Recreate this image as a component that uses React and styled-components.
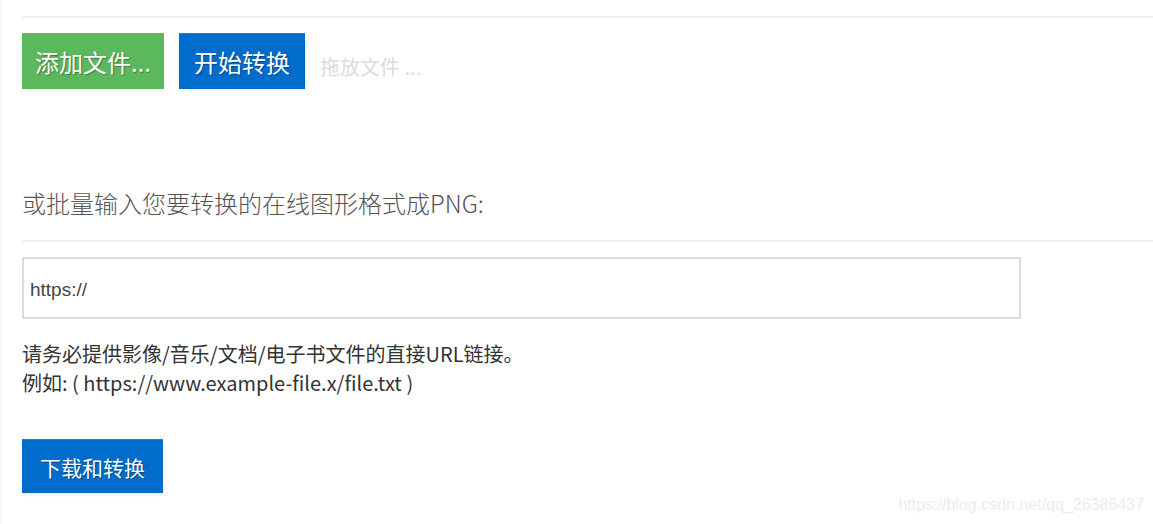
import React from 'react'
import styled, { createGlobalStyle } from 'styled-components'

const Global = createGlobalStyle`
  html, body {
    margin: 0;
    padding: 0;
    background: #fff;
  }
  body {
    font-family: "Open Sans", "Noto Sans CJK SC", sans-serif;
  }
`

const Page = styled.div`
  position: relative;
  width: 1153px;
  height: 524px;
  box-sizing: border-box;
  border-left: 2px solid #f8f8f8;
  padding: 16px 0 0 20px;
  overflow: hidden;
`

const Rule = styled.hr`
  margin: 0;
  border: 0;
  border-top: 2px solid #f0f0f0;
`

const Toolbar = styled.div`
  display: flex;
  align-items: center;
  gap: 15px;
  margin-top: 15px;
`

const Button = styled.button`
  height: ${p => p.$h || 56}px;
  padding: 0 ${p => p.$px || 15}px;
  border: 0;
  border-top: 1px solid ${p => (p.$green ? '#66bd66' : '#1b80d6')};
  background: ${p => (p.$green ? '#5cb85c' : '#006dcc')};
  color: #fff;
  font-family: "Noto Sans CJK SC", sans-serif;
  font-size: ${p => p.$fs || 24}px;
  font-weight: 400;
  text-shadow: 1px 1px 1px rgba(0, 0, 0, 0.35);
  cursor: pointer;
  white-space: nowrap;
  box-shadow: ${p => (p.$shadow ? '0 2px 3px rgba(0,0,0,0.08)' : 'none')};
`

const DropHint = styled.span`
  color: #dcdcdc;
  font-family: "Noto Sans CJK SC", sans-serif;
  font-size: 20px;
  padding-top: 10px;
`

const Heading = styled.h3`
  margin: 99px 0 0;
  font-family: "Noto Sans CJK SC", sans-serif;
  font-weight: 300;
  font-size: 24px;
  color: #555;
  line-height: 30px;
`

const SubRule = styled(Rule)`
  margin-top: 22px;
`

const UrlInput = styled.input`
  display: block;
  margin-top: 15px;
  width: 999px;
  height: 62px;
  box-sizing: border-box;
  border: 2px solid #dcdcdc;
  padding: 4px 6px 0;
  font-family: "Liberation Sans", Arial, sans-serif;
  font-size: 19px;
  color: #444;
  outline: none;
`

const Help = styled.p`
  margin: 20px 0 0;
  font-family: "Noto Sans CJK SC", sans-serif;
  font-size: 20px;
  line-height: 29px;
  color: #333;
`

const Footer = styled.div`
  margin-top: 42px;
`

const Watermark = styled.span`
  position: absolute;
  right: 9px;
  bottom: 10px;
  font-family: "Liberation Sans", Arial, sans-serif;
  font-size: 16px;
  color: #ececec;
`

export default function App() {
  return (
    <Page>
      <Global />
      <Rule />
      <Toolbar>
        <Button $green $px={13}>添加文件...</Button>
        <Button $px={15}>开始转换</Button>
        <DropHint>拖放文件 ...</DropHint>
      </Toolbar>
      <Heading>或批量输入您要转换的在线图形格式成PNG:</Heading>
      <SubRule />
      <UrlInput defaultValue="https://" />
      <Help>
        请务必提供影像/音乐/文档/电子书文件的直接URL链接。
        <br />
        例如: ( https://www.example-file.x/file.txt )
      </Help>
      <Footer>
        <Button $h={54} $fs={21} $px={18} $shadow>下载和转换</Button>
      </Footer>
      <Watermark>https://blog.csdn.net/qq_26386437</Watermark>
    </Page>
  )
}
